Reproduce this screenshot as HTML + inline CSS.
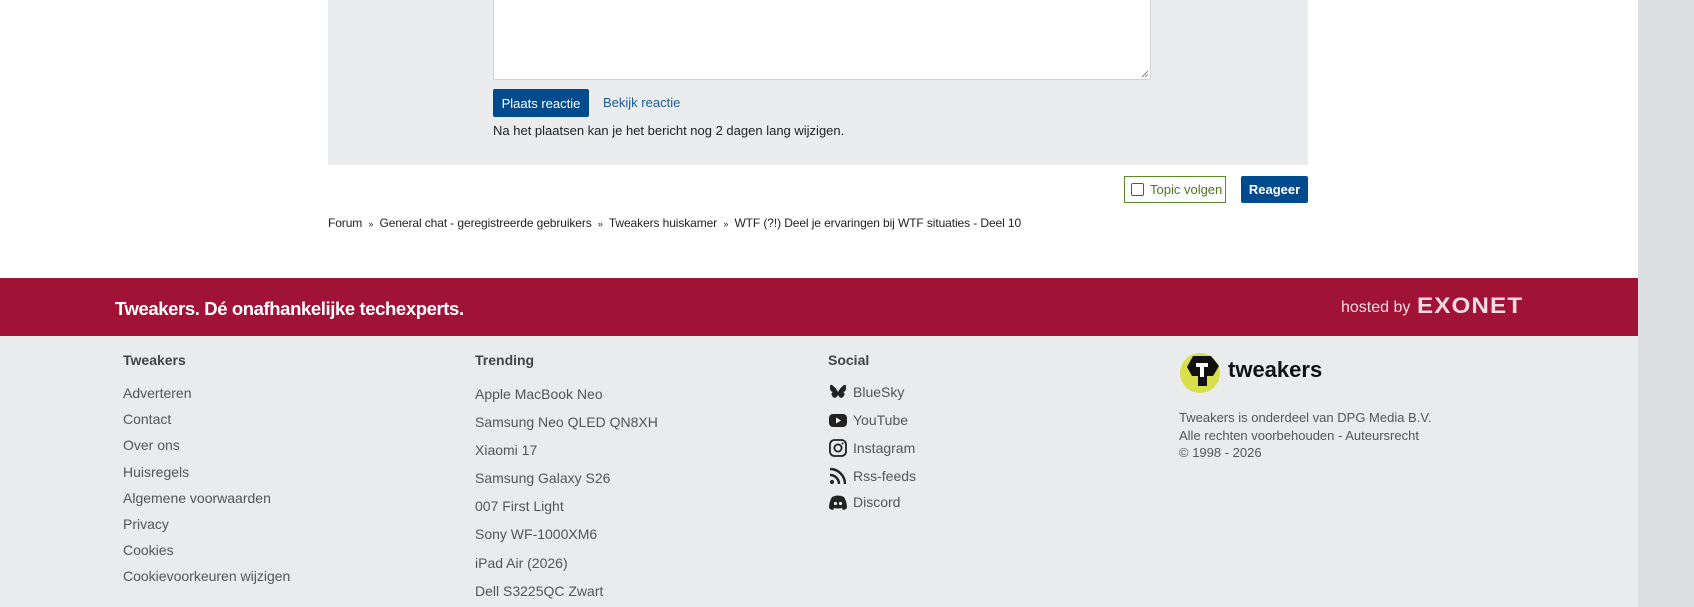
<!DOCTYPE html>
<html><head><meta charset="utf-8"><style>
*{margin:0;padding:0;box-sizing:border-box}
body{width:1694px;height:607px;overflow:hidden;background:#fff;font-family:"Liberation Sans",Arial,sans-serif;position:relative}
.a{position:absolute;white-space:nowrap}
.side{position:absolute;left:1638px;top:0;width:56px;height:607px;background:#dcdfe2}
.box{position:absolute;left:328px;top:0;width:980px;height:165px;background:#eaecee}
.ta{position:absolute;left:493px;top:-2px;width:658px;height:82px;background:#fff;border:1px solid #cfd3d7;border-radius:2px}
.btn{position:absolute;background:#004a8e;color:#fff;font-size:13px;border-radius:2px;display:flex;align-items:center;justify-content:center}
.red{position:absolute;left:0;top:278px;width:1638px;height:58px;background:#a11237}
.foot{position:absolute;left:0;top:336px;width:1638px;height:271px;background:#e9ebed}
.h{font-weight:bold;font-size:14px;color:#444}
.l{font-size:14px;color:#555}
.s{font-size:14px;color:#555;display:flex;align-items:center;gap:5px}
.s svg{width:20px;height:20px}
</style></head><body>
<div class="side"></div>
<div class="box"></div>
<div class="ta"><svg style="position:absolute;right:1px;bottom:1px" width="8" height="8"><path d="M1 7L7 1M4 7L7 4" stroke="#888"/></svg></div>
<div class="btn" style="left:493px;top:89px;width:96px;height:28px">Plaats reactie</div>
<div class="a" style="left:603px;top:95px;font-size:13px;color:#1a5a96">Bekijk reactie</div>
<div class="a" style="left:493px;top:123px;font-size:13px;color:#222">Na het plaatsen kan je het bericht nog 2 dagen lang wijzigen.</div>
<div class="a" style="left:1124px;top:176px;width:102px;height:27px;border:1px solid #5a8a2a;background:#fff;font-size:13px;color:#4a7a1a;display:flex;align-items:center;padding-left:6px;gap:6px"><span style="width:13px;height:13px;border:1px solid #555;border-radius:2px;display:inline-block"></span>Topic volgen</div>
<div class="btn" style="left:1241px;top:176px;width:67px;height:27px;font-size:13px;font-weight:bold">Reageer</div>
<div class="a" style="left:328px;top:216px;font-size:12px;color:#222;letter-spacing:-0.1px">Forum <span style="font-size:9px;margin:0 3px">»</span> General chat - geregistreerde gebruikers <span style="font-size:9px;margin:0 3px">»</span> Tweakers huiskamer <span style="font-size:9px;margin:0 3px">»</span> WTF (?!) Deel je ervaringen bij WTF situaties - Deel 10</div>
<div class="red"></div>
<div class="a" style="left:115px;top:298px;font-size:18.5px;font-weight:bold;color:#fff;letter-spacing:-0.4px">Tweakers. Dé onafhankelijke techexperts.</div>
<div class="a" style="left:1341px;top:299px;font-size:16px;color:#f3dbe2">hosted by</div>
<div class="a" style="left:1417px;top:293px;font-size:22px;font-weight:bold;color:#f3dbe2;letter-spacing:1px;transform:scaleX(1.1);transform-origin:left">EXONET</div>
<div class="foot"></div>
<div class="a h" style="left:123px;top:352px">Tweakers</div>
<div class="a h" style="left:475px;top:352px">Trending</div>
<div class="a h" style="left:828px;top:352px">Social</div>
<div class="a l" style="left:123px;top:380px;line-height:26.2px">Adverteren<br>Contact<br>Over ons<br>Huisregels<br>Algemene voorwaarden<br>Privacy<br>Cookies<br>Cookievoorkeuren wijzigen</div>
<div class="a l" style="left:475px;top:380px;line-height:28.1px">Apple MacBook Neo<br>Samsung Neo QLED QN8XH<br>Xiaomi 17<br>Samsung Galaxy S26<br>007 First Light<br>Sony WF-1000XM6<br>iPad Air (2026)<br>Dell S3225QC Zwart</div>
<div class="a s" style="left:828px;top:382px"><svg viewBox="0 0 20 20"><path d="M4 3c3 2 5 5 6 7 1-2 3-5 6-7 2-1 2 1 2 3 0 2-1 4-3 4 2 1 2 3 0 5-2 2-4 0-5-2-1 2-3 4-5 2-2-2-2-4 0-5-2 0-3-2-3-4 0-2 0-4 2-3z" fill="#222"/></svg>BlueSky</div>
<div class="a s" style="left:828px;top:410px"><svg viewBox="0 0 20 20"><rect x="1" y="4" width="18" height="13" rx="4" fill="#222"/><path d="M8 7.5v6l5-3z" fill="#fff"/></svg>YouTube</div>
<div class="a s" style="left:828px;top:438px"><svg viewBox="0 0 20 20"><rect x="2" y="2" width="16" height="16" rx="4.5" fill="none" stroke="#222" stroke-width="1.8"/><circle cx="10" cy="10" r="3.6" fill="none" stroke="#222" stroke-width="1.8"/><circle cx="14.5" cy="5.5" r="1" fill="#222"/></svg>Instagram</div>
<div class="a s" style="left:828px;top:466px"><svg viewBox="0 0 20 20"><circle cx="4" cy="16" r="2" fill="#222"/><path d="M2 9a9 9 0 0 1 9 9M2 3a15 15 0 0 1 15 15" fill="none" stroke="#222" stroke-width="2.4"/></svg>Rss-feeds</div>
<div class="a s" style="left:828px;top:492px"><svg viewBox="0 0 20 20"><path d="M4 5q6-3 12 0 3 5 3 11-2 2-4 2l-1-2q-4 1-8 0l-1 2q-2 0-4-2 0-6 3-11z" fill="#222"/><circle cx="7.5" cy="11.5" r="1.6" fill="#e9ebed"/><circle cx="12.5" cy="11.5" r="1.6" fill="#e9ebed"/></svg>Discord</div>
<svg class="a" style="left:1179px;top:350px" width="44" height="44" viewBox="0 0 44 44"><circle cx="21" cy="23" r="20" fill="#d7e04a"/><path d="M14 6h18l8 10-6 10h-6v10h-9V26h-6l-5-9z" fill="#111"/><path d="M17 13h12v4h-4v10h-4V17h-4z" fill="#fff"/></svg>
<div class="a" style="left:1228px;top:357px;font-size:22px;font-weight:bold;color:#111">tweakers</div>
<div class="a" style="left:1179px;top:409px;font-size:13px;color:#555;line-height:17.5px">Tweakers is onderdeel van DPG Media B.V.<br>Alle rechten voorbehouden - Auteursrecht<br>© 1998 - 2026</div>
</body></html>
